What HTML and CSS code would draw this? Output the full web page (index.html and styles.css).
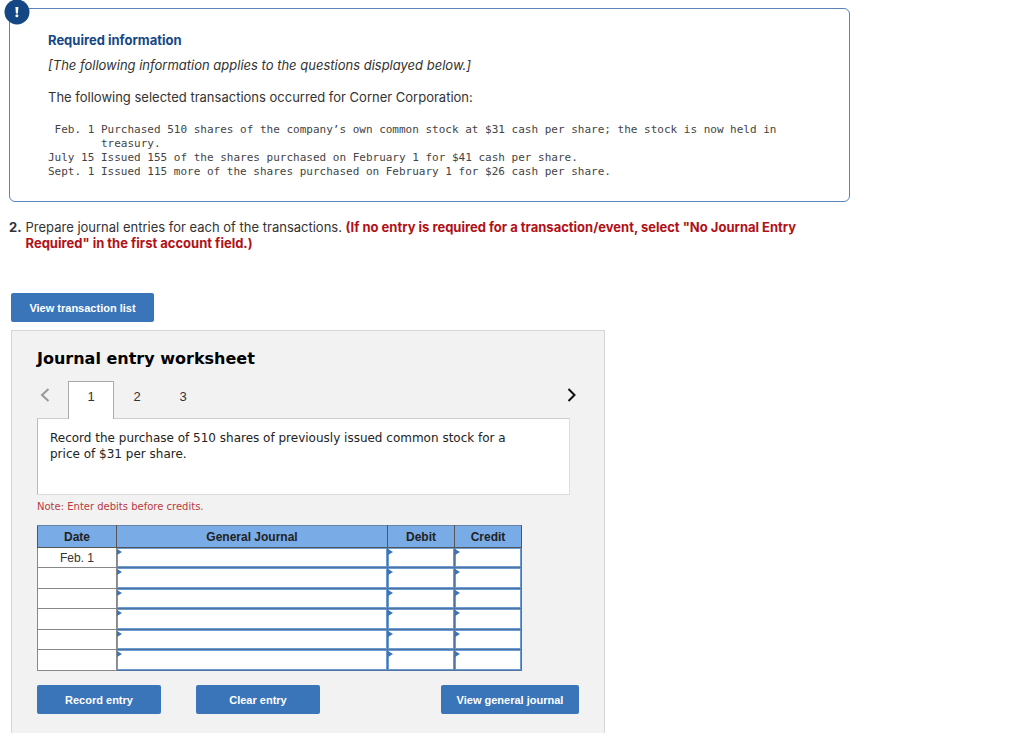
FILE: index.html
```html
<!DOCTYPE html>
<html lang="en">
<head>
<meta charset="utf-8">
<meta name="viewport" content="width=device-width, initial-scale=1">
<title>Journal entry worksheet</title>
<link rel="stylesheet" href="styles.css">
</head>
<body>
<main class="page">
  <section class="info">
    <svg class="info-badge" viewBox="0 0 26 26" aria-hidden="true"><circle cx="13" cy="13" r="12.5" fill="#154784"/><path d="M11.400 8h3l-.5 6.500h-2z" fill="#fff"/><circle cx="12.900" cy="16.800" r="1.500" fill="#fff"/></svg>
    <h2 class="info-title">Required information</h2>
    <p class="info-applies">[The following information applies to the questions displayed below.]</p>
    <p class="info-intro">The following selected transactions occurred for Corner Corporation:</p>
<pre class="transactions"> Feb. 1 Purchased 510 shares of the company’s own common stock at $31 cash per share; the stock is now held in
        treasury.
July 15 Issued 155 of the shares purchased on February 1 for $41 cash per share.
Sept. 1 Issued 115 more of the shares purchased on February 1 for $26 cash per share.</pre>
  </section>

  <div class="question">
    <b>2.</b>
    <p class="question-text">Prepare journal entries for each of the transactions. <strong class="hint">(If no entry is required for a transaction/event, select "No Journal Entry Required" in the first account field.)</strong></p>
  </div>

  <button class="btn btn-list" type="button">View transaction list</button>

  <section class="worksheet">
    <h1 class="worksheet-title">Journal entry worksheet</h1>
    <nav class="tabs" aria-label="Transactions">
      <button class="arrow arrow-prev" type="button" aria-label="Previous"><svg viewBox="0 0 10 16"><path d="M8.500 2 2 8l6.500 6" fill="none" stroke="#999" stroke-width="2"/></svg></button>
      <button class="tab tab-active" type="button">1</button>
      <button class="tab" type="button">2</button>
      <button class="tab" type="button">3</button>
      <button class="arrow arrow-next" type="button" aria-label="Next"><svg viewBox="0 0 10 16"><path d="m1.500 2 6 6-6 6" fill="none" stroke="#111" stroke-width="2"/></svg></button>
    </nav>
    <p class="prompt">Record the purchase of 510 shares of previously issued common stock for a<br>price of $31 per share.</p>
    <p class="note">Note: Enter debits before credits.</p>
    <table class="journal">
      <colgroup><col class="col-date"><col><col class="col-amount"><col class="col-amount"></colgroup>
      <thead><tr><th scope="col">Date</th><th scope="col">General Journal</th><th scope="col">Debit</th><th scope="col">Credit</th></tr></thead>
      <tbody>
        <tr><td>Feb. 1</td><td class="entry"><input aria-label="General Journal, row 1"></td><td class="entry"><input aria-label="Debit, row 1"></td><td class="entry"><input aria-label="Credit, row 1"></td></tr>
        <tr><td></td><td class="entry"><input aria-label="General Journal, row 2"></td><td class="entry"><input aria-label="Debit, row 2"></td><td class="entry"><input aria-label="Credit, row 2"></td></tr>
        <tr><td></td><td class="entry"><input aria-label="General Journal, row 3"></td><td class="entry"><input aria-label="Debit, row 3"></td><td class="entry"><input aria-label="Credit, row 3"></td></tr>
        <tr><td></td><td class="entry"><input aria-label="General Journal, row 4"></td><td class="entry"><input aria-label="Debit, row 4"></td><td class="entry"><input aria-label="Credit, row 4"></td></tr>
        <tr><td></td><td class="entry"><input aria-label="General Journal, row 5"></td><td class="entry"><input aria-label="Debit, row 5"></td><td class="entry"><input aria-label="Credit, row 5"></td></tr>
        <tr><td></td><td class="entry"><input aria-label="General Journal, row 6"></td><td class="entry"><input aria-label="Debit, row 6"></td><td class="entry"><input aria-label="Credit, row 6"></td></tr>
      </tbody>
    </table>
    <div class="actions">
      <button class="btn btn-entry" type="button">Record entry</button>
      <button class="btn btn-entry" type="button">Clear entry</button>
      <button class="btn btn-journal" type="button">View general journal</button>
    </div>
  </section>
</main>
</body>
</html>
```

FILE: styles.css
```css
* { box-sizing: border-box; }
body { margin: 0; background: #fff; color: #333; }
h1, h2, p, pre { margin: 0; }
button { font: inherit; border: 0; cursor: pointer; }

.page {
  display: flex;
  flex-direction: column;
  align-items: flex-start;
  max-width: 850px;
  min-height: 100vh;
  padding: 8px 0 0 9px;
  font: 13px/16px Inter, sans-serif;
}

.info {
  position: relative;
  width: 100%;
  padding: 23px 38px 22px;
  border: 1px solid #5b83b5;
  border-radius: 6px;
}
.info-badge { position: absolute; left: -6px; top: -10px; width: 26px; height: 26px; }
.info-title { color: #154784; font-size: 13px; line-height: 16px; }
.info-applies { margin-top: 9px; font-style: italic; }
.info-intro { margin-top: 16px; }
.transactions {
  margin-top: 18px;
  color: #444;
  font: 11px/14px "DejaVu Sans Mono", monospace;
}

.question { display: flex; gap: 4px; margin-top: 17px; padding-right: 24px; }
.hint { color: #b11116; }

.btn {
  height: 29px;
  padding: 0;
  border-radius: 2px;
  background: #3a75ba;
  color: #fff;
  font: bold 11px/16px "Liberation Sans", sans-serif;
}
.btn-list { width: 143px; margin: 42px 0 8px 2px; }

.worksheet {
  flex: 1;
  width: 100%;
  max-width: 594px;
  margin-left: 2px;
  padding: 18px 25px 20px;
  border: 1px solid #d6d6d6;
  border-bottom: 0;
  background: #f2f2f2;
}
.worksheet-title { color: #000; font: bold 16px/20px "DejaVu Sans", sans-serif; }

.tabs { display: flex; height: 38px; margin: 12px 0 -1px; }
.tab {
  width: 46px;
  padding: 0 0 8px;
  border: 1px solid transparent;
  border-bottom: 0;
  background: transparent;
  color: #333;
  font: 13px/16px "Liberation Sans", sans-serif;
}
.tab-active { position: relative; border-color: #aaa; background: #fff; }
.arrow { height: 28px; padding: 0; background: transparent; }
.arrow svg { display: block; width: 10px; height: 16px; }
.arrow-prev { width: 31px; padding-left: 3px; }
.arrow-next { margin-left: auto; padding-right: 2px; }

.prompt {
  max-width: 533px;
  min-height: 77px;
  padding: 11px 12px;
  border: 1px solid #ddd;
  border-top-color: #ccc;
  border-left-color: #bbb;
  background: #fff;
  color: #222;
  font: 12px/16px "DejaVu Sans", sans-serif;
}
.note { margin-top: 4px; color: #b83a40; font: 10px/16px "DejaVu Sans", sans-serif; }

.journal {
  width: 100%;
  max-width: 485px;
  margin-top: 10px;
  border-collapse: collapse;
  table-layout: fixed;
  font: 12px/16px "Liberation Sans", sans-serif;
}
.col-date { width: 79px; }
.col-amount { width: 67px; }
.journal th {
  height: 22px;
  padding: 0;
  border: 1px solid #555;
  border-top-color: #6884a6;
  background: #79ace6;
  color: #222;
}
.journal td {
  padding: 0;
  border: 1px solid #888;
  background: #fff;
  text-align: center;
}
.journal .entry { position: relative; border-color: #50749f; }
.entry input {
  display: block;
  width: 100%;
  height: 19px;
  padding: 0 8px;
  border: 1px solid #6c9bd2;
  background: #fff;
  font: inherit;
}
.journal tr:nth-child(even) input { height: 20px; }
.entry::before {
  content: "";
  position: absolute;
  left: 0;
  top: 1px;
  border: solid transparent;
  border-width: 3px 0 3px 5px;
  border-left-color: #3a75ba;
}

.actions { display: flex; margin-top: 14px; }
.btn-entry { width: 124px; margin-right: 35px; }
.btn-journal { width: 138px; margin-left: auto; }
```
